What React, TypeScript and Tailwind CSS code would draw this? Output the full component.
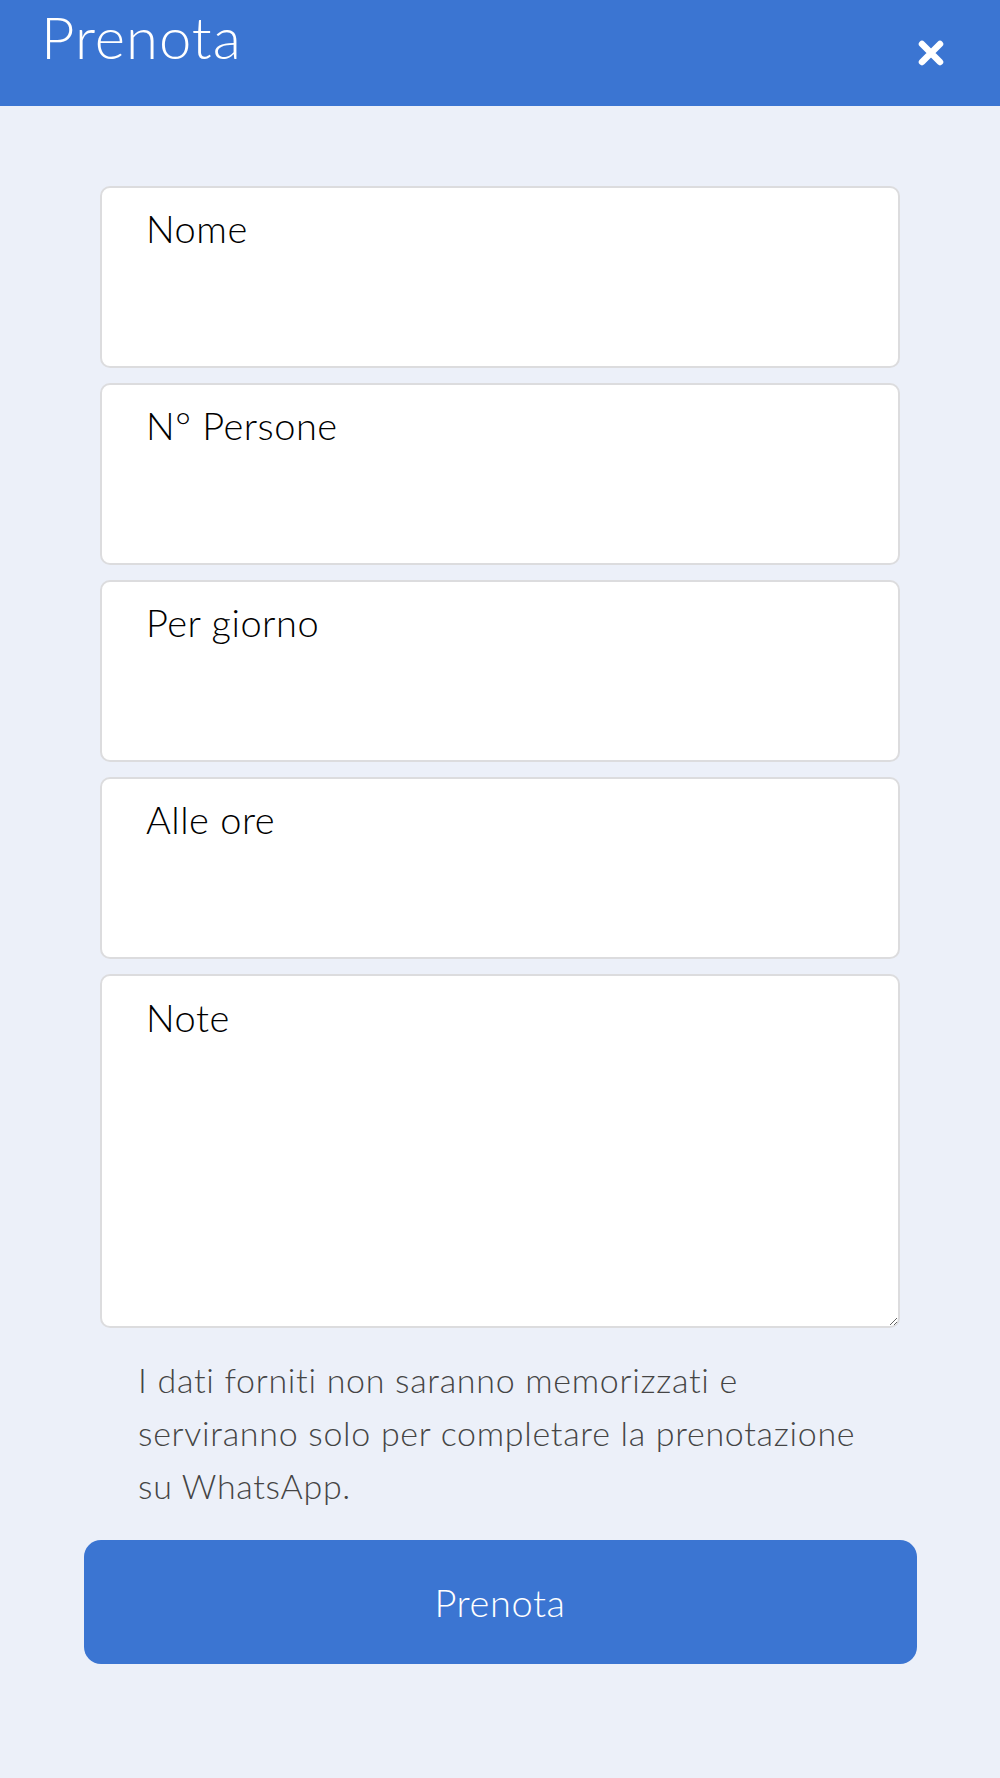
import { useState } from 'react'

export default function App() {
  const [form, setForm] = useState({ nome: '', persone: '', giorno: '', ore: '', note: '' })

  const fields = [
    { id: 'nome', label: 'Nome' },
    { id: 'persone', label: 'N° Persone' },
    { id: 'giorno', label: 'Per giorno' },
    { id: 'ore', label: 'Alle ore' },
  ] as const

  const update = (key: keyof typeof form, value: string) => {
    setForm({ ...form, [key]: value })
  }

  return (
    <div className="min-h-[1778px] bg-[#ecf0f9] font-['Lato',sans-serif]">
      {/* Header */}
      <header className="h-[106px] bg-[#3b75d2] flex items-start justify-between pl-[41px] pr-[55px]">
        <h1 className="text-[58px] leading-[70px] font-light tracking-[1px] text-white mt-[2px]">Prenota</h1>
        <button className="mt-[39px] text-white" aria-label="Chiudi">
          <svg width="28" height="28" viewBox="0 0 28 28">
            <path d="M5 5 L23 23 M23 5 L5 23" stroke="#fff" strokeWidth="6.5" strokeLinecap="round" />
          </svg>
        </button>
      </header>

      {/* Form */}
      <div className="pt-[80px] flex flex-col items-center">
        <div className="w-[800px] flex flex-col gap-[15px]">
          {fields.map((f) => (
            <input
              key={f.id}
              value={form[f.id]}
              onChange={(e) => update(f.id, e.target.value)}
              placeholder={f.label}
              className="h-[182px] w-full bg-white border-2 border-[#dcdcde] rounded-[10px] pl-[44px] pr-6 pt-[17px] pb-[115px] text-[38px] leading-[48px] font-light tracking-[0.5px] text-black placeholder:text-black outline-none"
            />
          ))}
          <textarea
            value={form.note}
            onChange={(e) => update('note', e.target.value)}
            placeholder="Note"
            className="h-[354px] w-full bg-white border-2 border-[#dcdcde] rounded-[10px] pl-[44px] pr-6 pt-[17px] text-[38px] leading-[48px] font-light tracking-[0.5px] text-black placeholder:text-black outline-none"
          />
        </div>

        <p className="w-[800px] pl-[38px] pr-[12px] mt-[25px] text-[34px] leading-[53px] font-light tracking-[0.7px] text-[#454545]">
          I dati forniti non saranno memorizzati e serviranno solo per completare la prenotazione su WhatsApp.
        </p>

        <button className="mt-[28px] w-[833px] h-[124px] rounded-[17px] bg-[#3b75d2] text-white text-[38px] font-light tracking-[0.6px]">
          Prenota
        </button>
      </div>
    </div>
  )
}
